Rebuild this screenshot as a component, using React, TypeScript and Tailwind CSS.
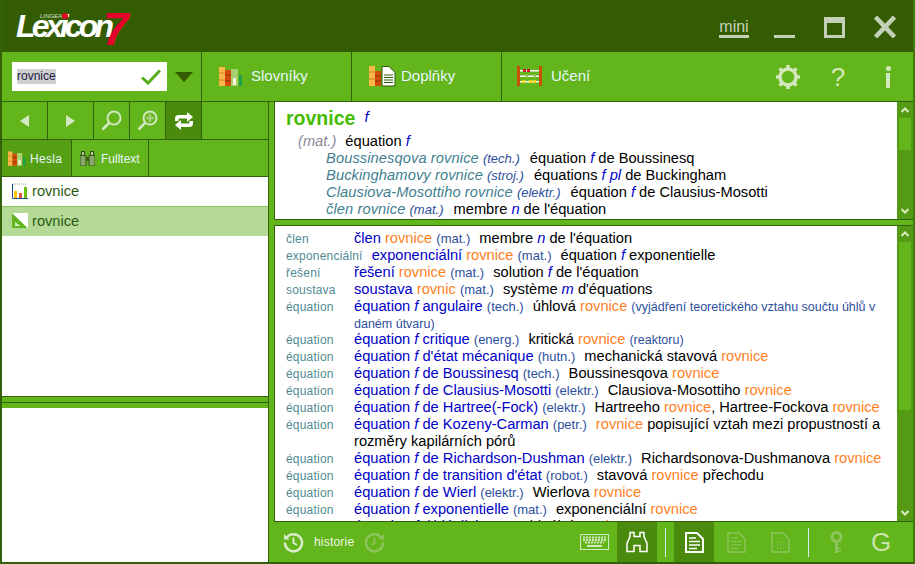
import type { ReactNode } from "react";

const DARK = "border-[#33610a]";

function Books({ small }: { small?: boolean }) {
  return (
    <svg width={small ? 18 : 24} height={small ? 16 : 20} viewBox="0 0 24 20">
      <rect x="0" y="0" width="6" height="19" fill="#fdb64a" />
      <path d="M0 6h6M0 13h6" stroke="#c9822a" />
      <rect x="6" y="3" width="6" height="16" fill="#d24b0a" />
      <path d="M6 8h6M6 14h6" stroke="#8e3205" />
      <rect x="12" y="2" width="7" height="17" fill="#a9cf6f" />
      <rect x="14" y="11" width="3" height="7" fill="#f2f5dc" />
      <rect x="20" y="8" width="3" height="11" fill="#1f9e4b" />
    </svg>
  );
}

function BooksDoc() {
  return (
    <svg width="27" height="21" viewBox="0 0 27 21">
      <rect x="0" y="0" width="6" height="20" fill="#fdb64a" />
      <path d="M0 6h6M0 13h6" stroke="#c9822a" />
      <rect x="6" y="5" width="6" height="15" fill="#d24b0a" />
      <path d="M6 10h6M6 15h6" stroke="#8e3205" />
      <path d="M13 .5h7l6 6v13.500h-13z" fill="#fff" stroke="#2f5a08" />
      <path d="M15 9h9M15 11.500h9M15 14h9M15 16.500h9" stroke="#2f5a08" />
    </svg>
  );
}

function Abacus() {
  return (
    <svg width="27" height="21" viewBox="0 0 27 21">
      <rect x="0" y="0" width="3" height="20" fill="#c94f0a" />
      <rect x="22" y="0" width="3" height="20" fill="#c94f0a" />
      <rect x="3" y="4" width="19" height="1.500" fill="#fff" />
      <rect x="3" y="9.500" width="19" height="1.500" fill="#fff" />
      <rect x="3" y="15" width="19" height="1.500" fill="#fff" />
      <rect x="6" y="3" width="3" height="3" fill="#d8102f" />
      <rect x="10" y="3" width="3" height="3" fill="#d8102f" />
      <rect x="8" y="8.500" width="3" height="3" fill="#a7c66a" />
      <rect x="16" y="8.500" width="3" height="3" fill="#a7c66a" />
      <rect x="5" y="14" width="3" height="3" fill="#ffd21f" />
      <rect x="12" y="14" width="3" height="3" fill="#ffd21f" />
      <rect x="16" y="14" width="3" height="3" fill="#ffd21f" />
    </svg>
  );
}

function Magnifier({ plus }: { plus?: boolean }) {
  return (
    <svg width="21" height="21" viewBox="0 0 21 21" fill="none" stroke="#d5e8c2">
      <circle cx="13" cy="8" r="6.500" strokeWidth="2" />
      <path d="M8 13 1.500 19.500" strokeWidth="2.500" />
      {plus && <path d="M13 4v8M9 8h8" strokeWidth="2.500" stroke="#a5cf7e" />}
    </svg>
  );
}

function RepeatIcon() {
  return (
    <svg width="20" height="20" viewBox="0 0 20 20" fill="#fff">
      <path d="M1 10V7.500C1 5 2.500 4 5 4h8V1l6 5-6 5V7.500H6C5 7.500 4.500 8 4.500 9v1z" />
      <path d="M19 10v2.500c0 2.500-1.500 3.500-4 3.500H7v3l-6-5 6-5v3.500h7c1 0 1.500-.5 1.500-1.500v-1z" />
    </svg>
  );
}

function Binoculars({ outline }: { outline?: boolean }) {
  if (outline) {
    return (
      <svg width="24" height="22" viewBox="0 0 24 22" fill="none" stroke="#fff" strokeWidth="1.500">
        <path d="M5 1.500h4v4h6v-4h4v4l3 7v8h-7v-6h-6v6H2v-8l3-7z" />
      </svg>
    );
  }
  return (
    <svg width="15" height="15" viewBox="0 0 15 15">
      <rect x="0" y="4" width="6" height="11" rx="1" fill="#8aa76a" stroke="#2f4f10" />
      <rect x="9" y="4" width="6" height="11" rx="1" fill="#8aa76a" stroke="#2f4f10" />
      <rect x="1.500" y="0.500" width="3" height="4" fill="#b9cfa0" stroke="#2f4f10" />
      <rect x="10.500" y="0.500" width="3" height="4" fill="#b9cfa0" stroke="#2f4f10" />
      <rect x="6" y="6" width="3" height="4" fill="#3d5f16" />
    </svg>
  );
}

function Gear() {
  return (
    <svg width="26" height="26" viewBox="0 0 26 26" fill="none" stroke="#d3e8bd">
      <circle cx="13" cy="13" r="8" strokeWidth="3.500" />
      <path
        d="M13 1v4M13 21v4M1 13h4M21 13h4M4.500 4.500l3 3M18.500 18.500l3 3M21.500 4.500l-3 3M7.500 18.500l-3 3"
        strokeWidth="3.500"
      />
    </svg>
  );
}

function Clock({ flip, dim }: { flip?: boolean; dim?: boolean }) {
  return (
    <svg
      width="21"
      height="21"
      viewBox="0 0 21 21"
      fill="none"
      stroke={dim ? "#8ec45c" : "#d9ebc8"}
      strokeWidth="2.500"
      className={flip ? "-scale-x-100" : ""}
    >
      <path d="M3.500 6A8.500 8.500 0 1 1 2 10.500" />
      <path d="M1 2v5.500h5.500" fill={dim ? "#8ec45c" : "#d9ebc8"} stroke="none" />
      <path d="M10.500 5.500v5.500l3.500 2" strokeWidth="2" />
    </svg>
  );
}

function Keyboard() {
  return (
    <svg width="29" height="16" viewBox="0 0 29 16" fill="none" stroke="#d3e8bd">
      <rect x="0.500" y="0.500" width="28" height="15" />
      <path d="M3 3.500h23M3 6h23M5 8.500h19" strokeWidth="2" strokeDasharray="2 1" />
      <path d="M7 12h15" strokeWidth="2" />
    </svg>
  );
}

function Doc({ active, dotted }: { active?: boolean; dotted?: boolean }) {
  const c = active ? "#fff" : "#8ec45c";
  return (
    <svg width="19" height="21" viewBox="0 0 19 21" fill="none" stroke={c} strokeWidth={active ? 2 : 1.500}>
      <path d="M1 1h11l6 6v13H1z" />
      <path
        d={dotted ? "M6 7h2M6 10h8M6 13h8M6 16h8" : "M4 6h7M4 9.500h11M4 13h11M4 16.500h8"}
        strokeDasharray={dotted ? "1.500 1.500" : undefined}
        strokeWidth={active ? 1.500 : 1}
      />
    </svg>
  );
}

function KeyIcon() {
  return (
    <svg width="13" height="23" viewBox="0 0 13 23" fill="none" stroke="#8ec45c">
      <circle cx="6.500" cy="6" r="4.500" strokeWidth="3" />
      <path d="M6.500 10v12" strokeWidth="3" />
      <path d="M8 20h3M8 17h3" strokeWidth="1.500" />
    </svg>
  );
}

function ScrollBar({ thumb }: { thumb: string }) {
  return (
    <div className="w-4 shrink-0 bg-[#549a14] flex flex-col">
      <div className="h-4 flex items-center justify-center shrink-0">
        <svg width="8" height="6" viewBox="0 0 8 6" fill="none" stroke="#d8ecc2" strokeWidth="2">
          <path d="M.5 5 4 1.500 7.500 5" />
        </svg>
      </div>
      <div className={`mx-0.5 shrink-0 bg-[#62b51a] ${thumb}`} />
      <div className="flex-1" />
      <div className="h-4 flex items-center justify-center shrink-0">
        <svg width="8" height="6" viewBox="0 0 8 6" fill="none" stroke="#d8ecc2" strokeWidth="2">
          <path d="M.5 1 4 4.500 7.500 1" />
        </svg>
      </div>
    </div>
  );
}

const F = ({ children = "f" }: { children?: ReactNode }) => (
  <i className="text-[#0000c8]">{children}</i>
);
const Dom = ({ children }: { children: ReactNode }) => (
  <span className="text-[#2b4f9e] text-[13px] leading-none mr-[5px]">{children}</span>
);
const Note = ({ children }: { children: ReactNode }) => (
  <span className="text-[#2b4f9e] text-[12.500px] leading-none">{children}</span>
);
const Or = ({ children }: { children: ReactNode }) => (
  <span className="text-[#ff7f1e]">{children}</span>
);
const Blue = ({ children }: { children: ReactNode }) => (
  <span className="text-[#0000c8]">{children}</span>
);

function Sub({ phrase, dom, children }: { phrase: string; dom: string; children: ReactNode }) {
  return (
    <div className="pl-[40px] text-black">
      <i className="text-[#3f8090] tracking-[0.1px]">{phrase}</i>{" "}
      <i className="text-[#2b4f9e] text-[13px] leading-none mr-[6px]">({dom})</i> {children}
    </div>
  );
}

function Row({ label, children, tight }: { label: string; children: ReactNode; tight?: boolean }) {
  return (
    <div className={`flex items-baseline ${tight ? "-mb-px" : ""}`}>
      <div className="shrink-0 min-w-[59px] mr-[9px] text-[12px] leading-none tracking-[0.2px] text-[#4f8a92]">
        {label}
      </div>
      <div className="flex-1 text-black">{children}</div>
    </div>
  );
}

function ToolTab({ icon, label }: { icon: ReactNode; label: string }) {
  return (
    <div className={`w-[150px] shrink-0 border-r ${DARK} flex items-center pl-[17px]`}>
      <div className="w-[32px] shrink-0">{icon}</div>
      <span className="text-[15px] text-[#e9f6ff]">{label}</span>
    </div>
  );
}

export default function App() {
  return (
    <div
      className={`w-[915px] h-[564px] overflow-hidden flex flex-col bg-[#62b51a] border-l-2 border-r-2 border-b-2 ${DARK} border-r-[#3f7a0c] font-['Liberation_Sans',Arial,sans-serif]`}
    >
      {/* titulek */}
      <div className="h-[52px] shrink-0 -mx-[2px] bg-[#345c03] flex items-start relative">
        <div className="relative ml-[16px] mt-[8px] w-[120px] h-[40px] text-white font-bold italic">
          <span className="absolute left-0 top-[2px] text-[32px] leading-[32px] tracking-[-3.800px]">Lexicon</span>
          <span className="absolute left-[24px] top-[5px] text-[6px] leading-[6px] font-normal text-[#d8e0cc]">LINGEA</span>
          <span className="absolute left-[46px] top-[5px] w-[6px] h-[6px] rounded-full bg-[#e4002b]" />
          <span className="absolute left-[87px] top-[-2px] text-[46px] leading-[46px] text-[#e4002b]">7</span>
        </div>
        <div className="ml-auto flex items-start pt-[16px] pr-[19px] text-[#c5d0b8]">
          <div className="mr-[25px] mt-[2px] w-[30px] text-center text-[16px] leading-[17px] border-b-[3px] border-[#c5d0b8]">
            mini
          </div>
          <div className="w-[21px] h-[3px] mt-[19px] bg-[#c5d0b8] mr-[29px]" />
          <div className="w-[21px] h-[21px] mt-px border-[3px] border-t-[6px] border-[#c5d0b8] mr-[29px]" />
          <svg width="22" height="22" viewBox="0 0 22 22" stroke="#c5d0b8" strokeWidth="4.500">
            <path d="M1.500 1 20.500 21M20.500 1 1.500 21" />
          </svg>
        </div>
      </div>

      {/* nástroje */}
      <div className={`h-[50px] shrink-0 flex border-b ${DARK}`}>
        <div className={`w-[200px] shrink-0 border-r ${DARK} flex items-center pl-[10px]`}>
          <div className="w-[155px] h-[29px] bg-white flex items-center pl-[5px] pr-[6px] justify-between">
            <span className="text-[12px] leading-[15px] text-[#1b1b44] bg-[#cfcfcf]">rovnice</span>
            <svg width="20" height="16" viewBox="0 0 20 16" fill="none" stroke="#55ad17" strokeWidth="3">
              <path d="M1 8.500 7 14 19 1.500" />
            </svg>
          </div>
          <div className="ml-[8px] w-0 h-0 border-l-[9px] border-r-[9px] border-t-[10px] border-l-transparent border-r-transparent border-t-[#345c03]" />
        </div>
        <ToolTab icon={<Books />} label="Slovníky" />
        <ToolTab icon={<BooksDoc />} label="Doplňky" />
        <div className="flex items-center pl-[15px]">
          <div className="w-[34px]">
            <Abacus />
          </div>
          <span className="text-[15px] text-[#e9f6ff]">Učení</span>
        </div>
        <div className="ml-auto flex items-center pr-[21px] text-[#d3e8bd]">
          <Gear />
          <span className="w-[50px] ml-[12px] text-center text-[26px] leading-[26px]">?</span>
          <span className="w-[8px] ml-[21px] flex flex-col items-center">
            <span className="w-[5px] h-[5px] rounded-full bg-[#d3e8bd]" />
            <span className="w-[4px] h-[15px] mt-[2px] bg-[#d3e8bd]" />
          </span>
        </div>
      </div>

      <div className="flex-1 flex min-h-0">
        {/* levý sloupec */}
        <div className={`w-[267px] shrink-0 flex flex-col border-r ${DARK}`}>
          <div className={`h-[38px] shrink-0 flex border-b ${DARK}`}>
            <div className={`w-[46px] border-r ${DARK} flex items-center justify-center`}>
              <div className="w-0 h-0 border-r-[9px] border-t-[6px] border-b-[6px] border-r-[#d5e8c2] border-t-transparent border-b-transparent" />
            </div>
            <div className={`w-[46px] border-r ${DARK} flex items-center justify-center`}>
              <div className="w-0 h-0 border-l-[9px] border-t-[6px] border-b-[6px] border-l-[#d5e8c2] border-t-transparent border-b-transparent" />
            </div>
            <div className={`w-[36px] border-r ${DARK} flex items-center justify-center`}>
              <Magnifier />
            </div>
            <div className={`w-[36px] border-r ${DARK} flex items-center justify-center`}>
              <Magnifier plus />
            </div>
            <div className={`w-[36px] border-r ${DARK} bg-[#4a8a0c] flex items-center justify-center`}>
              <RepeatIcon />
            </div>
          </div>
          <div className={`h-[37px] shrink-0 flex border-b ${DARK} text-[12px] text-[#e9f6ff]`}>
            <div className={`w-[70px] border-r ${DARK} bg-[#549f12] flex items-center pl-[6px] pt-px gap-[4px]`}>
              <Books small />
              <span className="tracking-[0.3px]">Hesla</span>
            </div>
            <div className={`w-[77px] border-r ${DARK} flex items-center pl-[8px] pt-px gap-[6px]`}>
              <Binoculars />
              <span>Fulltext</span>
            </div>
          </div>
          <div className={`h-[220px] shrink-0 bg-white border-b ${DARK} text-[14.667px] text-[#2a5a10]`}>
            <div className="h-[30px] flex items-center pl-[10px] pb-px gap-[4px] border-b border-[#8cc65c]">
              <svg width="16" height="16" viewBox="0 0 16 16">
                <path d="M1 1h14" stroke="#999" strokeDasharray="1 1" />
                <path d="M.5 1v14.500H16" fill="none" stroke="#1f4f8f" />
                <rect x="2" y="8" width="3" height="7" fill="#ffc400" />
                <rect x="7" y="10" width="3" height="5" fill="#e0563a" />
                <rect x="12" y="4" width="3" height="11" fill="#6cbf0a" />
              </svg>
              <span>rovnice</span>
            </div>
            <div className="h-[29px] bg-[#b5d996] flex items-center pl-[10px] pb-px gap-[4px]">
              <svg width="16" height="16" viewBox="0 0 16 16">
                <rect width="16" height="16" fill="#fff" />
                <path d="M0 0 16 15.500H0z" fill="#62b51a" />
                <path d="M3 9 8.500 13H3z" fill="#d5ecc0" />
              </svg>
              <span>rovnice</span>
            </div>
          </div>
          <div className="h-[5px] shrink-0" />
          <div className={`h-[6px] shrink-0 border-t ${DARK}`} />
          <div className="flex-1 bg-white" />
        </div>

        {/* pravý sloupec */}
        <div className="flex-1 min-w-0 flex flex-col">
          <div className={`h-[118px] shrink-0 ml-[5px] flex border-l border-b ${DARK}`}>
            <div className="flex-1 min-w-0 bg-white pl-[11px] text-[14.667px] leading-[17px] overflow-hidden">
              <div className="h-[31px] flex items-center">
                <b className="text-[19.500px] leading-[24px] text-[#45bb00]">rovnice</b>
                <F>
                  <span className="ml-[9px] text-[14.667px]">f</span>
                </F>
              </div>
              <div className="pl-[12px] text-black">
                <i className="text-[#8a8a9a] mr-[5px]">(mat.)</i> équation <F />
              </div>
              <Sub phrase="Boussinesqova rovnice" dom="tech.">
                équation <F /> de Boussinesq
              </Sub>
              <Sub phrase="Buckinghamovy rovnice" dom="stroj.">
                équations <F /> <F>pl</F> de Buckingham
              </Sub>
              <Sub phrase="Clausiova-Mosottiho rovnice" dom="elektr.">
                équation <F /> de Clausius-Mosotti
              </Sub>
              <Sub phrase="člen rovnice" dom="mat.">
                membre <F>n</F> de l'équation
              </Sub>
            </div>
            <ScrollBar thumb="h-[32px]" />
          </div>
          <div className="h-[5px] shrink-0" />
          <div className={`flex-1 min-h-0 ml-[5px] flex border-l border-t border-b ${DARK}`}>
            <div className="flex-1 min-w-0 bg-white pl-[11px] pr-[10px] pt-[4px] text-[14.667px] leading-[17px] overflow-hidden">
              <Row label="člen">
                <Blue>člen</Blue> <Or>rovnice</Or> <Dom>(mat.)</Dom> membre <F>n</F> de l'équation
              </Row>
              <Row label="exponenciální">
                <Blue>exponenciální</Blue> <Or>rovnice</Or> <Dom>(mat.)</Dom> équation <F /> exponentielle
              </Row>
              <Row label="řešení">
                <Blue>řešení</Blue> <Or>rovnice</Or> <Dom>(mat.)</Dom> solution <F /> de l'équation
              </Row>
              <Row label="soustava">
                <Blue>soustava</Blue> <Or>rovnic</Or> <Dom>(mat.)</Dom> système <F>m</F> d'équations
              </Row>
              <Row label="équation" tight>
                <Blue>
                  équation <F /> angulaire
                </Blue>{" "}
                <Dom>(tech.)</Dom> úhlová <Or>rovnice</Or>{" "}
                <Note>(vyjádření teoretického vztahu součtu úhlů v daném útvaru)</Note>
              </Row>
              <Row label="équation">
                <Blue>
                  équation <F /> critique
                </Blue>{" "}
                <Dom>(energ.)</Dom> kritická <Or>rovnice</Or> <Note>(reaktoru)</Note>
              </Row>
              <Row label="équation">
                <Blue>
                  équation <F /> d'état mécanique
                </Blue>{" "}
                <Dom>(hutn.)</Dom> mechanická stavová <Or>rovnice</Or>
              </Row>
              <Row label="équation">
                <Blue>
                  équation <F /> de Boussinesq
                </Blue>{" "}
                <Dom>(tech.)</Dom> Boussinesqova <Or>rovnice</Or>
              </Row>
              <Row label="équation">
                <Blue>
                  équation <F /> de Clausius-Mosotti
                </Blue>{" "}
                <Dom>(elektr.)</Dom> Clausiova-Mosottiho <Or>rovnice</Or>
              </Row>
              <Row label="équation">
                <Blue>
                  équation <F /> de Hartree(-Fock)
                </Blue>{" "}
                <Dom>(elektr.)</Dom> Hartreeho <Or>rovnice</Or>, Hartree-Fockova <Or>rovnice</Or>
              </Row>
              <Row label="équation">
                <Blue>
                  équation <F /> de Kozeny-Carman
                </Blue>{" "}
                <Dom>(petr.)</Dom> <Or>rovnice</Or> popisující vztah mezi propustností a rozměry kapilárních pórů
              </Row>
              <Row label="équation">
                <Blue>
                  équation <F /> de Richardson-Dushman
                </Blue>{" "}
                <Dom>(elektr.)</Dom> Richardsonova-Dushmanova <Or>rovnice</Or>
              </Row>
              <Row label="équation">
                <Blue>
                  équation <F /> de transition d'état
                </Blue>{" "}
                <Dom>(robot.)</Dom> stavová <Or>rovnice</Or> přechodu
              </Row>
              <Row label="équation">
                <Blue>
                  équation <F /> de Wierl
                </Blue>{" "}
                <Dom>(elektr.)</Dom> Wierlova <Or>rovnice</Or>
              </Row>
              <Row label="équation">
                <Blue>
                  équation <F /> exponentielle
                </Blue>{" "}
                <Dom>(mat.)</Dom> exponenciální <Or>rovnice</Or>
              </Row>
              <Row label="équation">
                <Blue>
                  équation <F /> d'idéalité
                </Blue>{" "}
                <Dom>(tech.)</Dom> ideální <Or>rovnice</Or>
              </Row>
            </div>
            <ScrollBar thumb="h-[168px]" />
          </div>

          {/* spodní lišta */}
          <div className="h-[40px] shrink-0 flex items-center pl-[14px] pr-[17px]">
            <Clock />
            <span className="ml-[10px] text-[12px] tracking-[0.2px] text-[#eef7e2]">historie</span>
            <span className="ml-[10px] flex">
              <Clock flip dim />
            </span>
            <div className="ml-auto flex items-center h-full">
              <Keyboard />
              <div className="ml-[8px] w-[40px] h-full bg-[#4a8a0c] flex items-center justify-center">
                <Binoculars outline />
              </div>
              <div className="ml-[8px] mr-[8px] w-px h-[29px] bg-[#dbe9f5]" />
              <div className="w-[40px] h-full bg-[#4a8a0c] flex items-center justify-center">
                <Doc active />
              </div>
              <div className="ml-[13px]">
                <Doc />
              </div>
              <div className="ml-[25px]">
                <Doc dotted />
              </div>
              <div className="ml-[18px] mr-[21px] w-px h-[29px] bg-[#dbe9f5]" />
              <KeyIcon />
              <span className="ml-[28px] w-[25px] text-[26px] leading-[26px] text-[#c9e4ac]">G</span>
            </div>
          </div>
        </div>
      </div>
    </div>
  );
}
